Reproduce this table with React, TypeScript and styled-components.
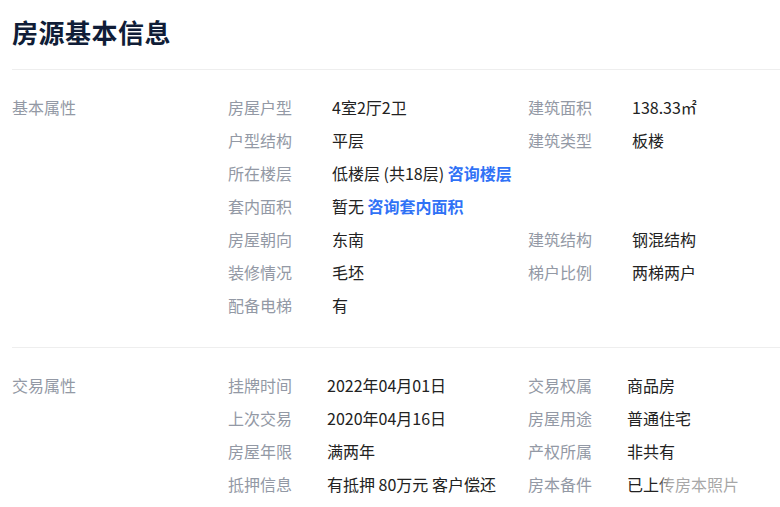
import React from "react";
import styled, { createGlobalStyle } from "styled-components";

const Global = createGlobalStyle`
  html, body { margin: 0; padding: 0; background: #fff; }
  body { font-family: "Noto Sans CJK SC", "Noto Sans", sans-serif; }
`;

const Page = styled.div`
  padding-left: 12px;
  width: 768px;
  overflow: hidden;
`;

const Header = styled.div`
  padding: 13px 0 19px;
  border-bottom: 1px solid #eeeeee;
`;

const Title = styled.h2`
  margin: 0;
  font-size: 26px;
  line-height: 37px;
  font-weight: 700;
  color: #101d37;
  letter-spacing: 0.5px;
`;

const Section = styled.div<{ $last?: boolean }>`
  display: flex;
  padding: 21px 0 ${(p) => (p.$last ? "0" : "25px")};
  border-bottom: ${(p) => (p.$last ? "none" : "1px solid #eeeeee")};
`;

const SectionLabel = styled.div`
  width: 216px;
  flex: none;
  font-size: 16px;
  line-height: 33px;
  color: #9399a5;
`;

const Grid = styled.div<{ $labelW: number; $valueW: number }>`
  display: grid;
  grid-template-columns: ${(p) => `${p.$labelW}px ${p.$valueW}px ${p.$labelW}px auto`};
  grid-auto-rows: 33px;
  align-items: center;
`;

const Label = styled.div`
  font-size: 16px;
  line-height: 33px;
  color: #9399a5;
  white-space: nowrap;
`;

const Value = styled.div<{ $span?: boolean; $fade?: boolean }>`
  position: relative;
  font-size: 16px;
  line-height: 33px;
  color: #222222;
  white-space: nowrap;
  grid-column: ${(p) => (p.$span ? "span 3" : "auto")};
  ${(p) =>
    p.$fade
      ? `&::after {
    content: "";
    position: absolute;
    left: 30px;
    top: 6px;
    width: 84px;
    height: 22px;
    background: linear-gradient(90deg, rgba(255,255,255,0) 0%, rgba(255,255,255,0.6) 14%, rgba(255,255,255,0.6) 100%);
  }`
      : ""}
`;

const Link = styled.span`
  color: #3072f6;
  font-weight: 700;
`;

type Item = { label: string; value: React.ReactNode; span?: boolean; fade?: boolean };

const basic: Item[] = [
  { label: "房屋户型", value: "4室2厅2卫" },
  { label: "建筑面积", value: "138.33㎡" },
  { label: "户型结构", value: "平层" },
  { label: "建筑类型", value: "板楼" },
  { label: "所在楼层", value: <>低楼层 (共18层) <Link>咨询楼层</Link></>, span: true },
  { label: "套内面积", value: <>暂无 <Link>咨询套内面积</Link></>, span: true },
  { label: "房屋朝向", value: "东南" },
  { label: "建筑结构", value: "钢混结构" },
  { label: "装修情况", value: "毛坯" },
  { label: "梯户比例", value: "两梯两户" },
  { label: "配备电梯", value: "有", span: true },
];

const trade: Item[] = [
  { label: "挂牌时间", value: "2022年04月01日" },
  { label: "交易权属", value: "商品房" },
  { label: "上次交易", value: "2020年04月16日" },
  { label: "房屋用途", value: "普通住宅" },
  { label: "房屋年限", value: "满两年" },
  { label: "产权所属", value: "非共有" },
  { label: "抵押信息", value: "有抵押 80万元 客户偿还" },
  { label: "房本备件", value: "已上传房本照片", fade: true },
];

function Rows({ items }: { items: Item[] }) {
  return (
    <>
      {items.map((it) => (
        <React.Fragment key={it.label}>
          <Label>{it.label}</Label>
          <Value $span={it.span} $fade={it.fade}>{it.value}</Value>
        </React.Fragment>
      ))}
    </>
  );
}

export default function App() {
  return (
    <Page>
      <Global />
      <Header>
        <Title>房源基本信息</Title>
      </Header>
      <Section>
        <SectionLabel>基本属性</SectionLabel>
        <Grid $labelW={104} $valueW={196}>
          <Rows items={basic} />
        </Grid>
      </Section>
      <Section $last>
        <SectionLabel>交易属性</SectionLabel>
        <Grid $labelW={99} $valueW={201}>
          <Rows items={trade} />
        </Grid>
      </Section>
    </Page>
  );
}
